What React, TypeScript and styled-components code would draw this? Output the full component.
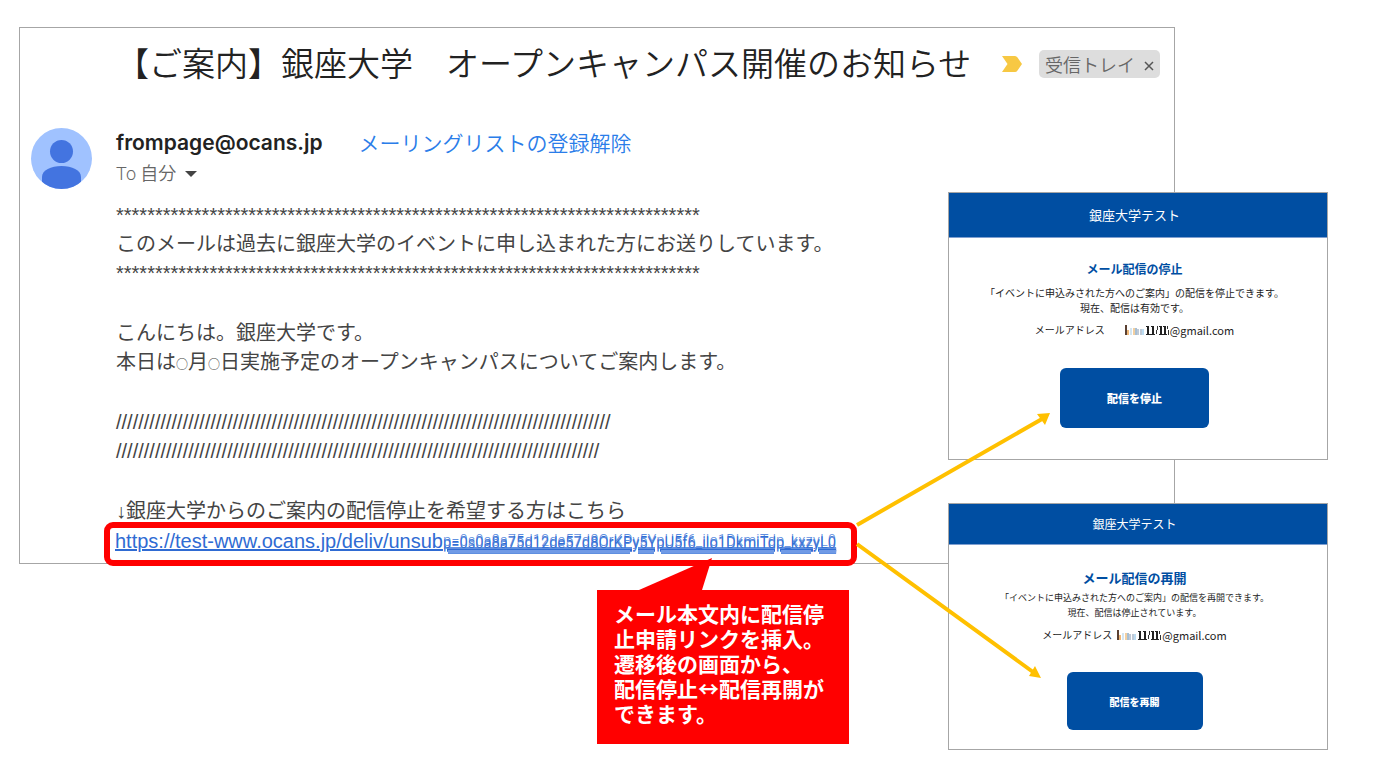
import React from 'react';
import styled, { createGlobalStyle } from 'styled-components';

const GlobalStyle = createGlobalStyle`
  * { box-sizing: border-box; }
  body {
    margin: 0;
    background: #ffffff;
    font-family: "Liberation Sans", "Noto Sans CJK JP", sans-serif;
    color: #222222;
  }
  h1, h2, h3, p { margin: 0; font-weight: 400; }
`;

const Stage = styled.main`
  position: relative;
  display: grid;
  grid-template-columns: minmax(0, 1fr) 227px 153px;
  align-items: start;
  padding: 27px 57px 27px 19px;
`;

const MailSide = styled.div`
  grid-column: 1 / 3;
  grid-row: 1;
  display: flex;
  flex-direction: column;
  align-items: flex-start;
  gap: 26px;
`;

const ScreenSide = styled.div`
  grid-column: 2 / 4;
  grid-row: 1;
  display: flex;
  flex-direction: column;
  gap: 43px;
  padding-top: 165px;
`;

const Mail = styled.article`
  width: 100%;
  border: 1px solid #a6a6a6;
  background: #ffffff;
  padding: 10px 14px 0 11px;
`;

const SubjectRow = styled.header`
  display: flex;
  align-items: center;
  gap: 23px;
  padding-left: 85px;
`;

const Subject = styled.h1`
  font-family: "Noto Sans CJK JP", sans-serif;
  font-size: 33px;
  font-weight: 350;
  line-height: 48px;
  white-space: nowrap;
`;

const Labels = styled.div`
  display: flex;
  align-items: center;
  gap: 17px;
  margin-left: auto;
  padding-top: 4px;
`;

const InboxTag = styled.button`
  display: flex;
  align-items: center;
  gap: 9px;
  height: 28px;
  padding: 0 6px;
  border: 0;
  border-radius: 5px;
  background: #dddddd;
  color: #666666;
  font-family: "Noto Sans CJK JP", sans-serif;
  font-size: 18px;
  font-weight: 350;
  line-height: 26px;
  white-space: nowrap;
`;

const CloseMark = styled.svg`
  margin-top: 4px;
`;

const SenderRow = styled.div`
  display: flex;
  gap: 24px;
  margin-top: 42px;
`;

const SenderInfo = styled.div`
  display: flex;
  flex-direction: column;
`;

const SenderLine = styled.div`
  display: flex;
  align-items: center;
  gap: 36px;
  line-height: 30px;
  font-size: 21px;
`;

const Sender = styled.strong`
  font-family: Inter, "Open Sans", sans-serif;
  font-size: 21px;
  font-weight: 600;
`;

const ListLink = styled.a`
  color: #2a7de9;
  font-family: "Noto Sans CJK JP", sans-serif;
  font-weight: 350;
  line-height: 28px;
  padding-bottom: 2px;
  text-decoration: none;
`;

const Recipient = styled.div`
  display: flex;
  align-items: center;
  gap: 9px;
  font-family: Roboto, "Noto Sans CJK JP", sans-serif;
  font-size: 18px;
  font-weight: 350;
  line-height: 32px;
  color: #666666;
`;

const Body = styled.div`
  display: flex;
  flex-direction: column;
  gap: 31px;
  margin-top: 11px;
  padding-left: 85px;
  font-size: 20px;
  font-weight: 350;
  line-height: 29px;
  white-space: nowrap;
  color: #444444;
`;

const SmallCircle = styled.span`
  font-family: "Noto Sans CJK JP", sans-serif;
  font-size: 12px;
  line-height: 12px;
`;

const Highlight = styled.div`
  width: fit-content;
  margin: -4px 0 -3px -12px;
  padding: 0 15px 5px 5px;
  border: 6px solid #ff0000;
  border-radius: 9px;
  line-height: 26px;
`;

const UrlLink = styled.a`
  color: #2f6bd3;
  text-decoration: underline;
`;

const Smeared = styled.span`
  font-family: "Liberation Sans Narrow", "Roboto Condensed", "Liberation Sans", sans-serif;
  font-size: 17px;
  text-decoration: underline 3px #6f9ae6;
  text-shadow: 0 -2px #5f8fe0, 0 1px #5f8fe0;
`;

const Callout = styled.aside`
  position: relative;
  width: 252px;
  margin-left: 578px;
  padding: 11px 17px 18px;
  background: #ff0000;
  color: #ffffff;
  font-family: "Noto Sans CJK JP", sans-serif;
  font-size: 21px;
  font-weight: 700;
  line-height: 25px;
  white-space: nowrap;
`;

const CalloutTail = styled.svg`
  position: absolute;
  left: 42px;
  bottom: 100%;
`;

const Screen = styled.section`
  border: 1px solid #a6a6a6;
  background: #ffffff;
  font-family: "Noto Sans CJK JP", sans-serif;
  color: #222222;
`;

const ScreenBar = styled.h2<{ $compact?: boolean }>`
  padding-right: 7px;
  border-bottom: 1px solid #7f9fd0;
  background: #004ea2;
  color: #ffffff;
  font-size: ${(p) => (p.$compact ? 12 : 13)}px;
  line-height: ${(p) => (p.$compact ? 40 : 44)}px;
  text-align: center;
`;

const ScreenBody = styled.div<{ $compact?: boolean }>`
  display: flex;
  flex-direction: column;
  align-items: center;
  padding: ${(p) => (p.$compact ? '23px 7px 19px 0' : '21px 7px 31px 0')};
`;

const ScreenTitle = styled.h3<{ $compact?: boolean }>`
  margin-bottom: ${(p) => (p.$compact ? 2 : 6)}px;
  color: #004ea2;
  font-size: ${(p) => (p.$compact ? 13 : 12)}px;
  font-weight: 700;
  line-height: 20px;
`;

const ScreenText = styled.p<{ $compact?: boolean }>`
  font-size: ${(p) => (p.$compact ? 9 : 10)}px;
  line-height: 15px;
  text-align: center;
`;

const AddressRow = styled.p<{ $gap: number }>`
  display: flex;
  align-items: center;
  gap: ${(p) => p.$gap}px;
  margin-top: 7px;
  font-size: 10px;
  line-height: 16px;
`;

const Address = styled.span`
  display: flex;
  align-items: center;
  font-size: 11px;
`;

const ActionButton = styled.button<{ $compact?: boolean }>`
  width: ${(p) => (p.$compact ? 136 : 149)}px;
  height: ${(p) => (p.$compact ? 58 : 60)}px;
  margin-top: ${(p) => (p.$compact ? 29 : 30)}px;
  border: 0;
  border-radius: 6px;
  background: #004ea2;
  color: #ffffff;
  font-family: inherit;
  font-size: ${(p) => (p.$compact ? 10 : 11)}px;
  font-weight: 900;
`;

const Arrows = styled.svg`
  position: absolute;
  top: 405px;
  right: 330px;
  pointer-events: none;
`;

const Avatar = () => (
  <svg width="61" height="61" viewBox="0 0 61 61" aria-hidden="true">
    <defs>
      <clipPath id="disc"><circle cx="30.5" cy="30.5" r="30.5" /></clipPath>
    </defs>
    <g clipPath="url(#disc)">
      <rect width="61" height="61" fill="#a0c2ff" />
      <circle cx="30.5" cy="23.5" r="11.5" fill="#4374e0" />
      <path d="M11 62V49C11 42 20 38 30.500 38S50 42 50 49V62Z" fill="#4374e0" />
    </g>
  </svg>
);

const ImportanceMark = () => (
  <svg width="20" height="16" viewBox="0 0 20 16" aria-hidden="true">
    <path d="M0 0H13Q14.500 0 15.500 1.500L20 8L15.500 14.500Q14.500 16 13 16H0L5.500 8Z" fill="#f7c843" />
  </svg>
);

/* Mosaic strokes that hide the first part of the address */
const MaskedName = () => (
  <svg width="46" height="12" viewBox="0 0 46 12" aria-hidden="true">
    <path d="M2 1V11" stroke="#5a4032" strokeWidth="2" />
    <path d="M4 6V11" stroke="#f0b878" strokeWidth="2" />
    <path d="M7 4V11" stroke="#d4e6f2" strokeWidth="2" />
    <path d="M10 4V11" stroke="#f3cfa0" strokeWidth="2" />
    <path d="M12 4V11" stroke="#4f7ea8" strokeWidth="1" />
    <path d="M14 5V11M17 5V11" stroke="#7f93ad" strokeWidth="1" />
    <path d="M19 5V11" stroke="#bcdcf2" strokeWidth="2" />
    <path d="M24 2V11M29 2V11M37 2V11M41 2V11" stroke="#222222" strokeWidth="2" />
    <path d="M22 10.500H31M35 10.500H43M22 2.500H24M27 2.500H29M35 2.500H37M39 2.500H41" stroke="#222222" />
    <path d="M32.500 6V10M33.500 2V6M43.500 2V5M44.500 6V11" stroke="#333333" />
  </svg>
);

export default function App() {
  return (
    <>
      <GlobalStyle />
      <Stage>
        <MailSide>
          <Mail>
            <SubjectRow>
              <Subject>【ご案内】銀座大学　オープンキャンパス開催のお知らせ</Subject>
              <Labels>
                <ImportanceMark />
                <InboxTag type="button">
                  受信トレイ
                  <CloseMark width="10" height="10" viewBox="0 0 10 10" aria-hidden="true">
                    <path d="M1 1L9 9M9 1L1 9" stroke="#555555" strokeWidth="1.500" />
                  </CloseMark>
                </InboxTag>
              </Labels>
            </SubjectRow>
            <SenderRow>
              <Avatar />
              <SenderInfo>
                <SenderLine>
                  <Sender>frompage@ocans.jp</Sender>
                  <ListLink href="#list">メーリングリストの登録解除</ListLink>
                </SenderLine>
                <Recipient>
                  To 自分
                  <svg width="12" height="6" viewBox="0 0 12 6" aria-hidden="true">
                    <path d="M0 0H12L6 6Z" fill="#444444" />
                  </svg>
                </Recipient>
              </SenderInfo>
            </SenderRow>
            <Body>
              <p>
                {'*'.repeat(75)}<br />
                このメールは過去に銀座大学のイベントに申し込まれた方にお送りしています。<br />
                {'*'.repeat(75)}
              </p>
              <p>
                こんにちは。銀座大学です。<br />
                本日は<SmallCircle>○</SmallCircle>月<SmallCircle>○</SmallCircle>日実施予定のオープンキャンパスについてご案内します。
              </p>
              <p>
                {'/'.repeat(89)}<br />
                {'/'.repeat(87)}
              </p>
              <div>
                <p>↓銀座大学からのご案内の配信停止を希望する方はこちら</p>
                <Highlight>
                  <UrlLink href="#unsubscribe">
                    https://test-www.ocans.jp/deliv/unsub<Smeared>p=0s0a8a75d12de57d8OrKPy5YpU5f6_ilo1DkmiTdp_kxzyL0</Smeared>
                  </UrlLink>
                </Highlight>
              </div>
            </Body>
          </Mail>
          <Callout>
            <CalloutTail width="74" height="32" viewBox="0 0 74 32" aria-hidden="true">
              <path d="M0 32L73 0L63 32Z" fill="#ff0000" />
            </CalloutTail>
            メール本文内に配信停<br />
            止申請リンクを挿入。<br />
            遷移後の画面から、<br />
            配信停止↔配信再開が<br />
            できます。
          </Callout>
        </MailSide>

        <ScreenSide>
          <Screen>
            <ScreenBar>銀座大学テスト</ScreenBar>
            <ScreenBody>
              <ScreenTitle>メール配信の停止</ScreenTitle>
              <ScreenText>
                「イベントに申込みされた方へのご案内」の配信を停止できます。<br />
                現在、配信は有効です。
              </ScreenText>
              <AddressRow $gap={19}>
                メールアドレス
                <Address><MaskedName />@gmail.com</Address>
              </AddressRow>
              <ActionButton type="button">配信を停止</ActionButton>
            </ScreenBody>
          </Screen>
          <Screen>
            <ScreenBar $compact>銀座大学テスト</ScreenBar>
            <ScreenBody $compact>
              <ScreenTitle $compact>メール配信の再開</ScreenTitle>
              <ScreenText $compact>
                「イベントに申込みされた方へのご案内」の配信を再開できます。<br />
                現在、配信は停止されています。
              </ScreenText>
              <AddressRow $gap={4}>
                メールアドレス
                <Address><MaskedName />@gmail.com</Address>
              </AddressRow>
              <ActionButton type="button" $compact>配信を再開</ActionButton>
            </ScreenBody>
          </Screen>
        </ScreenSide>

        <Arrows width="199" height="280" viewBox="0 0 199 280" aria-hidden="true">
          <path d="M1 120L186 14M1 139L177 267" stroke="#ffc000" strokeWidth="4" fill="none" />
          <path d="M194 8L189 20L181 9Z M185 273L173 271L179 261Z" fill="#ffc000" />
        </Arrows>
      </Stage>
    </>
  );
}
